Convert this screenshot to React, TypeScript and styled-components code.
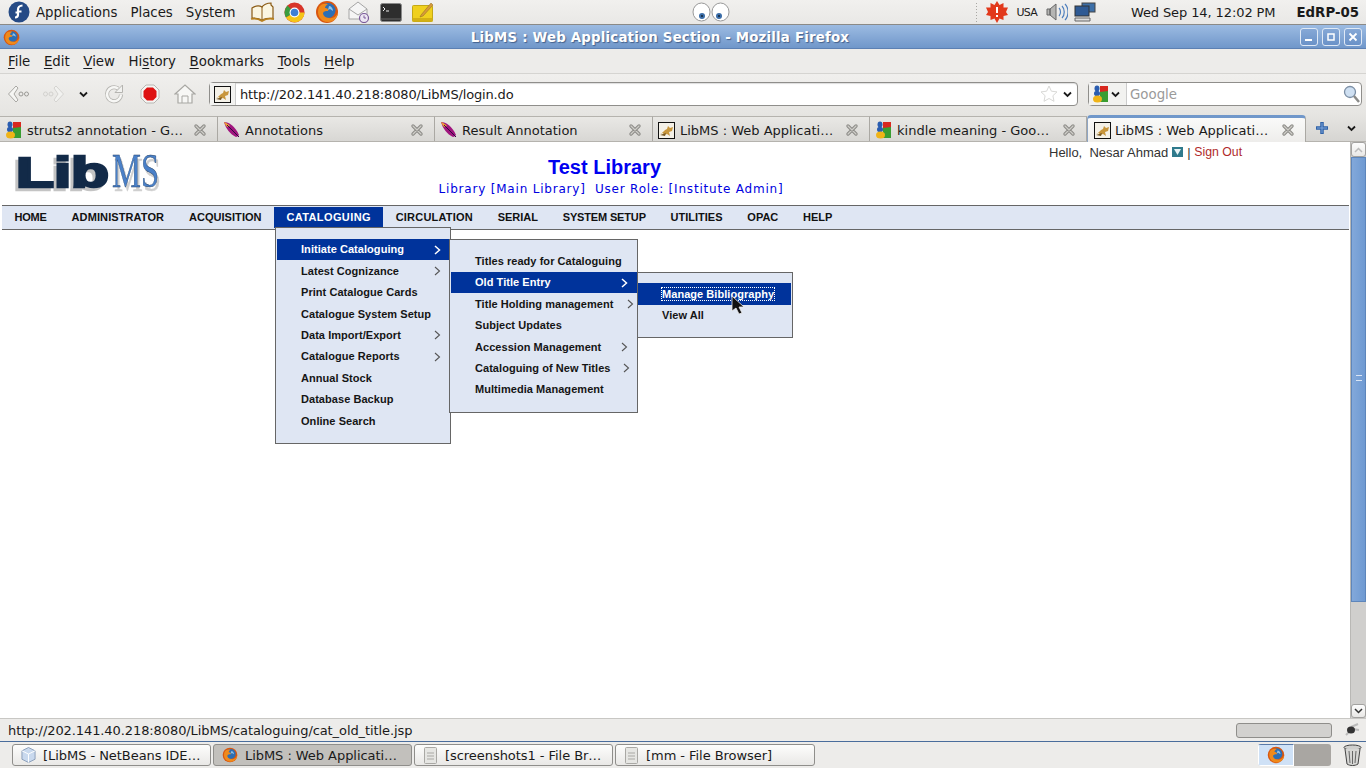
import React from "react";
import styled, { createGlobalStyle } from "styled-components";

const Global = createGlobalStyle`
  html, body { margin: 0; padding: 0; background: #fff; overflow: hidden; }
  * { box-sizing: border-box; }
  svg { flex: none; display: block; }
`;
const Desktop = styled.div`
  width: 1366px; height: 768px; display: flex; flex-direction: column; overflow: hidden;
  font-family: "DejaVu Sans", sans-serif; font-size: 13.33px; color: #1a1a1a; background: #edecea;
`;
const TopPanel = styled.div`
  height: 25px; display: flex; align-items: center; background: linear-gradient(#f1f0ee, #e9e8e6);
  border-bottom: 1px solid #8b8a87; flex: none; padding: 0 7px 0 8px;
`;
const PanelMenu = styled.span`margin-left: ${p => p.$ml}px; white-space: nowrap;`;
const LaunchIcons = styled.div`display: flex; align-items: center; margin-left: 11px;`;
const LaunchCell = styled.div`width: 32px; height: 24px; display: flex; align-items: center; justify-content: center;`;
const EyesWrap = styled.div`margin-left: 253px; display: flex; align-items: center;`;
const Tray = styled.div`margin-left: auto; display: flex; align-items: center;`;
const TrayHandle = styled.div`
  width: 4px; height: 20px; margin-right: 7px;
  background-image: radial-gradient(#a8a7a3 0.7px, transparent 0.9px); background-size: 3px 3px;
`;
const TrayText = styled.span`
  font-size: ${p => p.$size || 13}px; font-weight: ${p => p.$bold ? 700 : 400}; margin-left: ${p => p.$ml}px; white-space: nowrap;
  letter-spacing: ${p => p.$ls || 0}px;
`;
const TitleBar = styled.div`
  height: 24px; flex: none; display: flex; align-items: center; padding: 1px 3px 0 3px;
  background: linear-gradient(#9cbbe2, #7097ca); border-bottom: 1px solid #5c80b3;
`;
const TitleText = styled.div`
  flex: 1; text-align: center; color: #fff; font-weight: 700; font-size: 13.33px; letter-spacing: .2px;
  text-shadow: 1px 1px 1px #44618c;
`;
const WinButtons = styled.div`display: flex; gap: 4px; margin-right: 1px;`;
const WinButton = styled.div`
  width: 18px; height: 18px; border: 1px solid #dfe9f6; border-radius: 3px; background: linear-gradient(#86a8d6, #6a92c8);
  display: flex; align-items: center; justify-content: center;
`;
const MenuBar = styled.div`
  height: 25px; flex: none; display: flex; align-items: center; padding-left: 8px; gap: 13.6px;
  background: #edecea; border-bottom: 1px solid #d5d4d1;
`;
const MenuLabel = styled.span`
  u { text-decoration: underline; text-underline-offset: 2px; text-decoration-thickness: 1px; }
`;
const NavBar = styled.div`
  height: 40px; flex: none; display: flex; align-items: center; padding-left: 7px;
  background: linear-gradient(#f0efed, #e6e5e2);
`;
const NavIcons = styled.div`display: flex; align-items: center; width: 202px;`;
const NavIcon = styled.div`margin-left: ${p => p.$ml || 0}px; display: flex;`;
const UrlBox = styled.div`
  width: 869px; height: 24px; display: flex; align-items: center; background: #fff;
  border: 1px solid #8f8e8b; border-radius: 4px; box-shadow: inset 0 1px 1px #ddd;
`;
const UrlFav = styled.div`
  width: 26px; height: 22px; display: flex; align-items: center; justify-content: center; border-right: 1px solid #ccc; background: #f2f2f0;
`;
const UrlText = styled.span`margin-left: 4px; flex: 1; font-size: 13px; letter-spacing: -.16px;`;
const UrlDrop = styled.span`margin: 0 4px 0 4px; display: flex;`;
const SearchBox = styled.div`
  width: 274px; height: 24px; margin-left: 10px; display: flex; align-items: center; background: #fff;
  border: 1px solid #8f8e8b; border-radius: 4px;
`;
const EnginePick = styled.div`
  width: 38px; height: 22px; display: flex; align-items: center; padding-left: 3px; gap: 1px; border-right: 1px solid #ccc; background: #f2f2f0;
`;
const SearchPlaceholder = styled.span`flex: 1; color: #9a9a9a; margin-left: 3px;`;
const TabStrip = styled.div`
  height: 28px; flex: none; display: flex; align-items: flex-end; background: linear-gradient(#e6e5e2, #d6d5d2);
  border-bottom: 1px solid #b5b3ae; font-size: 13px;
`;
const Tab = styled.div`
  width: ${p => p.$w}px; height: ${p => p.$active ? 27 : 25}px; display: flex; align-items: center; flex: none;
  padding: ${p => p.$active ? 0 : 2}px 0 0 ${p => p.$active ? 6 : 5}px;
  background: ${p => p.$active ? "linear-gradient(#fafaf9, #eeedeb)" : "linear-gradient(#e9e8e5, #d8d7d4)"};
  border-right: 1px solid #aaa8a3; margin-bottom: ${p => p.$active ? -1 : 0}px;
  border-top: ${p => p.$active ? "3px solid #7097ca" : "1px solid #b5b3ae"};
  border-left: ${p => p.$active ? "1px solid #8ea5c4" : "none"};
  border-radius: ${p => p.$active ? "4px 4px 0 0" : "0"};
`;
const TabLabel = styled.span`flex: 1; margin-left: ${p => p.$ml || 5}px; white-space: nowrap;`;
const TabClose = styled.span`width: 14px; height: 14px; margin-right: 10px; display: flex;`;
const TabExtras = styled.div`display: flex; align-items: center; height: 26px; padding-left: 9px; gap: 17px;`;
const Body = styled.div`flex: 1; min-height: 0; display: flex; background: #fff;`;
const Page = styled.div`flex: 1; font-family: "Liberation Sans", Arial, sans-serif; padding-left: 2px;`;
const Header = styled.div`
  height: 63px; display: grid; grid-template-columns: 160px 889px 1fr; margin-left: -2px;
`;
const LogoCell = styled.div`padding: 10px 0 0 12px;`;
const LogoLib = styled.text`
  font-family: "Liberation Sans", sans-serif; font-weight: 700; font-size: 42px; fill: #122a48; stroke: #122a48; stroke-width: 2.5px;
  filter: drop-shadow(-3px 3px 0 #c4c4c4);
`;
const LogoMS = styled.text`
  font-family: "Liberation Serif", serif; font-size: 48px; fill: #4a80c8; stroke: #1c3a60; stroke-width: .4px;
  filter: drop-shadow(2px 4px 0 #cfcfcf);
`;
const HeaderCenter = styled.div`display: flex; flex-direction: column; align-items: center; padding-top: 14px;`;
const LibTitle = styled.div`font-size: 20px; font-weight: 700; color: #0000f0; line-height: 23px;`;
const LibSub = styled.div`
  font-family: "DejaVu Sans", sans-serif; font-size: 12px; color: #0000e0; line-height: 17px; margin-top: 2px; padding-left: 13px; white-space: pre; letter-spacing: .8px;
`;
const Hello = styled.div`font-size: 13px; color: #333; display: flex; align-items: center; white-space: pre; height: 20px;`;
const SignOut = styled.span`color: #b02a2a; font-size: 12.3px;`;
const DownBadge = styled.span`
  display: inline-flex; width: 11px; height: 10px; background: #2f7a8c; margin: 0 4px 0 4px; align-items: center; justify-content: center;
`;
const NavRow = styled.div`
  height: 25px; width: 1347px; display: flex; background: #dfe6f3; border-top: 1px solid #666; border-bottom: 1px solid #666; position: relative;
`;
const NavItem = styled.div`
  height: ${p => p.$active ? 21 : 23}px; margin-top: ${p => p.$active ? 1 : 0}px; padding: 0 12.4px; display: flex; align-items: center;
  font-size: 11px; font-weight: 700; line-height: 21px; letter-spacing: ${p => p.$ls || 0}px;
  color: ${p => p.$active ? "#fff" : "#111"}; background: ${p => p.$active ? "#00339b" : "transparent"};
`;
const Dropdown = styled.div`
  position: absolute; left: ${p => p.$left}px; top: ${p => p.$top}px; width: ${p => p.$w}px; height: ${p => p.$h}px;
  background: #dfe6f3; border: 1px solid #666; padding: ${p => p.$pt}px ${p => p.$pr}px 0 ${p => p.$pleft}px; z-index: ${p => p.$z};
`;
const DropItem = styled.div`
  height: 21.4px; padding-left: ${p => p.$pl}px; display: flex; align-items: center; position: relative;
  font-size: 11px; font-weight: 700; color: ${p => p.$on ? "#fff" : "#151515"}; background: ${p => p.$on ? "#00339b" : "transparent"};
  white-space: nowrap; letter-spacing: .05px;
`;
const Focused = styled.span`outline: 1px dotted #fff; outline-offset: 0;`;
const Chevron = styled.svg`position: absolute; right: ${p => p.$r}px; top: 6px;`;
const Cursor = styled.svg`position: absolute; left: 731px; top: 295px; z-index: 9;`;
const Scrollbar = styled.div`width: 16px; flex: none; display: flex; flex-direction: column; background: #d0cfcd; border-left: 1px solid #b9b8b5;`;
const ScrollBtn = styled.div`
  height: ${p => p.$h}px; flex: none; background: linear-gradient(#fdfdfd, #e9e8e6); border: 1px solid #a3a2a0; border-radius: 3px;
  display: flex; align-items: center; justify-content: center;
`;
const ScrollThumb = styled.div`
  height: 445px; flex: none; padding-bottom: 4px; background: linear-gradient(90deg, #82a8da, #6f9ad2); border: 1px solid #5e86bb; display: flex; align-items: center; justify-content: center;
`;
const ScrollGap = styled.div`flex: 1;`;
const Grip = styled.div`width: 6px; height: 6px; border-top: 1px solid #dbe6f5; border-bottom: 1px solid #dbe6f5; background: linear-gradient(transparent 40%, #dbe6f5 40%, #dbe6f5 60%, transparent 60%);`;
const StatusBar = styled.div`
  height: 24px; flex: none; display: flex; align-items: center; padding-left: 8px; background: #edecea; border-top: 1px solid #c8c7c4; border-bottom: 1px solid #4a6d9c;
`;
const StatusText = styled.span`flex: 1; font-size: 13px; letter-spacing: -.09px;`;
const Progress = styled.div`width: 96px; height: 15px; background: #d2d1cf; border: 1px solid #8f8e8b; border-radius: 3px; margin-right: 12px;`;
const BugWrap = styled.div`width: 22px; display: flex;`;
const TaskBar = styled.div`
  height: 26px; flex: none; display: flex; align-items: center; padding-left: 12px; gap: 2px; background: #edecea; font-size: 13px; letter-spacing: -.05px;
`;
const TaskBtn = styled.div`
  width: ${p => p.$w}px; height: 22px; display: flex; align-items: center; padding-left: 8px; gap: 7px; flex: none; white-space: nowrap;
  border: 1px solid #8f8e8b; border-radius: 3px; background: ${p => p.$on ? "#c2c0bc" : "linear-gradient(#fdfdfc, #e9e8e6)"};
`;
const Switcher = styled.div`
  width: 73px; height: 22px; margin-left: 441px; display: flex; background: #a9a6a2; border-radius: 3px; overflow: hidden; flex: none;
`;
const SwitchActive = styled.div`
  width: 36px; height: 22px; background: #cfe1f6; border: 1px solid #fff; border-top: 1px solid #5a7aa8; display: flex; align-items: center; justify-content: center;
`;
const TrashWrap = styled.div`margin-left: 10px; display: flex;`;

const Firefox = ({ s = 22 }: { s?: number }) => (
  <svg width={s} height={s} viewBox="0 0 24 24">
    <circle cx="12" cy="12" r="11" fill="#d9560f" />
    <circle cx="13" cy="10.5" r="7.5" fill="#2c6fb5" />
    <path d="M4 7c-3 7 1 15 9 15 6 0 10-5 10-10-1 4-5 7-9 6-4 0-6-3-6-5 1-2 3-2 5-2 1-2-1-3-3-3 0-1 1-3 3-4C9 3 6 4 4 7z" fill="#ef8a1c" />
    <path d="M14 6c2 0 4 2 4 5l-3-2-2 1z" fill="#8fc1e8" />
  </svg>
);
const GFav = () => (
  <svg width="17" height="18" viewBox="0 0 17 18">
    <path d="M8 1h8v7H8z" fill="#d8281f" />
    <path d="M8 7l8-1v11H8z" fill="#3a9d32" />
    <ellipse cx="5" cy="3.500" rx="2.500" ry="3" fill="#2a5db0" />
    <ellipse cx="5" cy="8.500" rx="3" ry="2.800" fill="#2a5db0" />
    <ellipse cx="5.500" cy="14" rx="4.500" ry="3.500" fill="#f0b418" />
  </svg>
);
const Feather = () => (
  <svg width="18" height="18" viewBox="0 0 18 18">
    <path d="M1 1c5 0 11 4 15 13-1 1-2 2-3 2C7 13 3 8 1 1z" fill="#a0157e" />
    <path d="M1 1c1 3 3 5 4 5l2-1C5 3 3 1.500 1 1z" fill="#f0a030" />
    <path d="M4 4l12 12" stroke="#300840" strokeWidth="1" />
  </svg>
);
const Tomcat = ({ s = 17 }: { s?: number }) => (
  <svg width={s} height={s} viewBox="0 0 17 17">
    <rect x=".5" y=".5" width="16" height="16" fill="#f4f1e8" stroke="#111" />
    <path d="M2 12c3-1 4-4 7-5l1-3 2 2 3-1-1 4-3 1 1 4-3-2-3 1-1-2z" fill="#c8963c" />
    <path d="M2 13l6-2-1 3z" fill="#7a5a24" />
  </svg>
);
const CloseX = () => (
  <svg width="14" height="14" viewBox="0 0 14 14">
    <path d="M3 3l8 8M11 3l-8 8" stroke="#8d8c88" strokeWidth="3.400" strokeLinecap="round" />
    <path d="M3 3l8 8M11 3l-8 8" stroke="#cfcec9" strokeWidth="1.200" strokeLinecap="round" />
  </svg>
);
const DropV = ({ w = 9 }: { w?: number }) => (
  <svg width={w} height="7" viewBox="0 0 9 7"><path d="M1 1.500l3.500 3.500L8 1.500" fill="none" stroke="#1a1a1a" strokeWidth="1.800" /></svg>
);
const MenuArrow = ({ r, on }: { r: number; on?: boolean }) => (
  <Chevron $r={r} width="7" height="10" viewBox="0 0 7 10">
    <path d="M1 1l4.500 4L1 9" fill="none" stroke={on ? "#fff" : "#555"} strokeWidth={on ? 1.500 : 1.100} />
  </Chevron>
);
const DocIcon = () => (
  <svg width="15" height="17" viewBox="0 0 15 17">
    <rect x="1.500" y=".5" width="12" height="16" rx="1" fill="#e6e6e3" stroke="#a9a8a4" />
    <path d="M4 6h7M4 9h7M4 12h7" stroke="#a9a8a4" />
  </svg>
);

const tabs = [
  { t: "struts2 annotation - G…", i: <GFav />, w: 218, ml: 5 },
  { t: "Annotations", i: <Feather />, w: 217, ml: 4 },
  { t: "Result Annotation", i: <Feather />, w: 218, ml: 4 },
  { t: "LibMS : Web Applicati…", i: <Tomcat />, w: 217, ml: 5 },
  { t: "kindle meaning - Goo…", i: <GFav />, w: 217, ml: 5 },
];
const nav: [string, number][] = [["HOME", -.15], ["ADMINISTRATOR", .1], ["ACQUISITION", .05], ["CATALOGUING", .39], ["CIRCULATION", .2], ["SERIAL", 0], ["SYSTEM SETUP", -.16], ["UTILITIES", 0], ["OPAC", 0], ["HELP", 0]];
const menu1: [string, boolean][] = [["Initiate Cataloguing", true], ["Latest Cognizance", true], ["Print Catalogue Cards", false], ["Catalogue System Setup", false], ["Data Import/Export", true], ["Catalogue Reports", true], ["Annual Stock", false], ["Database Backup", false], ["Online Search", false]];
const menu2: [string, number][] = [["Titles ready for Cataloguing", 0], ["Old Title Entry", 9], ["Title Holding management", 3], ["Subject Updates", 0], ["Accession Management", 9], ["Cataloguing of New Titles", 7], ["Multimedia Management", 0]];

export default function App() {
  return (
    <Desktop>
      <Global />
      <TopPanel>
        <svg width="22" height="22" viewBox="0 0 22 22">
          <circle cx="11" cy="11" r="10.500" fill="#254a85" />
          <path d="M14.500 4.500c-3 0-4.500 2-4.500 4v3H7.500M13.500 10.500H10v3c0 2-1.500 3-3 3" fill="none" stroke="#fff" strokeWidth="2.200" />
        </svg>
        <PanelMenu $ml={6}>Applications</PanelMenu>
        <PanelMenu $ml={13}>Places</PanelMenu>
        <PanelMenu $ml={13}>System</PanelMenu>
        <LaunchIcons>
          <LaunchCell>
            <svg width="25" height="20" viewBox="0 0 25 20"><path d="M2 16V6c3-2 7-3 10-1 1-2 5-4 9-4v2l2 2v11c-4 0-8 0-11 2-3-2-7-2-10-2z" fill="#fbf6e2" stroke="#8a5a14" strokeWidth="1.200" /><path d="M12 5v12" stroke="#8a5a14" /><path d="M1 17c4-1 8 0 11 2 3-2 7-3 12-2" fill="none" stroke="#b8801e" strokeWidth="1.800" /></svg>
          </LaunchCell>
          <LaunchCell>
            <svg width="21" height="21" viewBox="0 0 22 22"><circle cx="11" cy="11" r="10.500" fill="#d8352a" /><path d="M11 11L2 16.200A10.500 10.500 0 0 1 3.600 3.600z" fill="#3a9d3f" /><path d="M11 11l-9 5.200A10.500 10.500 0 0 0 21.500 11z" fill="#f5c518" /><circle cx="11" cy="11" r="5.200" fill="#fff" /><circle cx="11" cy="11" r="4" fill="#3e7fd6" /></svg>
          </LaunchCell>
          <LaunchCell><Firefox s={24} /></LaunchCell>
          <LaunchCell>
            <svg width="22" height="22" viewBox="0 0 22 22"><path d="M1 8l9-7 9 7v10H1z" fill="#f5f5f5" stroke="#a5a5a5" /><path d="M1 8l9 6 9-6" fill="none" stroke="#a5a5a5" /><circle cx="16" cy="17" r="4.500" fill="#ece6f2" stroke="#7a5a9a" strokeWidth="1.200" /><path d="M16 14.500V17h2" stroke="#7a5a9a" fill="none" /></svg>
          </LaunchCell>
          <LaunchCell>
            <svg width="22" height="19" viewBox="0 0 22 19"><rect x=".5" y=".5" width="21" height="18" rx="2" fill="#2e2e2e" stroke="#8a8a8a" /><path d="M3 4l2 2-2 2" stroke="#eee" fill="none" /><path d="M6 8h3" stroke="#eee" /><path d="M1 16h20" stroke="#666" /></svg>
          </LaunchCell>
          <LaunchCell>
            <svg width="22" height="21" viewBox="0 0 22 21"><rect x="0.500" y="3.500" width="20" height="16" rx="1" fill="#f0d01e" stroke="#c4a818" /><path d="M0.500 16h20v3.500H.5z" fill="#d3b014" /><path d="M9 13l10-12 2 2-10 11-3 1z" fill="#d79a3a" stroke="#8a6a20" strokeWidth=".5" /></svg>
          </LaunchCell>
        </LaunchIcons>
        <EyesWrap>
          <svg width="38" height="20" viewBox="0 0 38 20">
            <ellipse cx="9.500" cy="10" rx="8.500" ry="9" fill="#fff" stroke="#999" /><ellipse cx="28.500" cy="10" rx="8.500" ry="9" fill="#fff" stroke="#999" />
            <circle cx="10" cy="14" r="3" fill="#3b6da8" /><circle cx="27" cy="14" r="3" fill="#3b6da8" />
            <circle cx="10" cy="14" r="1" fill="#123" /><circle cx="27" cy="14" r="1" fill="#123" />
          </svg>
        </EyesWrap>
        <Tray>
          <TrayHandle />
          <svg width="22" height="22" viewBox="0 0 22 22"><path d="M11 0l2.500 4 4-2 0 4.500 4.500 0-2 4.500 2 3-4.500 1v4l-4-1.500L11 22l-2.500-4.500-4 1.500v-4L0 14l2-3-2-4.500 4.500 0 0-4.500 4 2z" fill="#e2391c" /><path d="M11 6v6M11 14v2" stroke="#fff" strokeWidth="2" /></svg>
          <TrayText $size={11} $ml={9} $ls={-.8}>USA</TrayText>
          <svg width="22" height="20" viewBox="0 0 22 20" style={{ marginLeft: 9 }}><path d="M1 7h3v6H1zM4 7l6-5v16l-6-5z" fill="#b5b5b3" stroke="#666" /><path d="M13 6c2 2 2 6 0 8M16 4c3 3 3 9 0 12M19 2c4 4 4 12 0 16" fill="none" stroke="#4f7fbd" strokeWidth="1.200" /></svg>
          <svg width="22" height="21" viewBox="0 0 22 21" style={{ marginLeft: 6 }}><rect x="8" y="1" width="13" height="9" fill="#3d6fa8" stroke="#444" /><rect x="1" y="4" width="14" height="10" fill="#2f5a94" stroke="#333" /><path d="M1 16h15v3H1z" fill="#ddd" stroke="#666" /></svg>
          <TrayText $ml={35} $ls={-.1}>Wed Sep 14, 12:02 PM</TrayText>
          <TrayText $ml={21} $bold $size={13.33}>EdRP-05</TrayText>
        </Tray>
      </TopPanel>
      <TitleBar>
        <Firefox s={17} />
        <TitleText>LibMS : Web Application Section - Mozilla Firefox</TitleText>
        <WinButtons>
          <WinButton><svg width="10" height="10" viewBox="0 0 10 10"><path d="M1 8h7" stroke="#fff" strokeWidth="2" /></svg></WinButton>
          <WinButton><svg width="10" height="10" viewBox="0 0 10 10"><rect x="2" y="2" width="6" height="6" fill="none" stroke="#fff" strokeWidth="1.500" /></svg></WinButton>
          <WinButton><svg width="10" height="10" viewBox="0 0 10 10"><path d="M1.500 1.500l7 7M8.500 1.500l-7 7" stroke="#fff" strokeWidth="1.800" /></svg></WinButton>
        </WinButtons>
      </TitleBar>
      <MenuBar>
        <MenuLabel><u>F</u>ile</MenuLabel>
        <MenuLabel><u>E</u>dit</MenuLabel>
        <MenuLabel><u>V</u>iew</MenuLabel>
        <MenuLabel>Hi<u>s</u>tory</MenuLabel>
        <MenuLabel><u>B</u>ookmarks</MenuLabel>
        <MenuLabel><u>T</u>ools</MenuLabel>
        <MenuLabel><u>H</u>elp</MenuLabel>
      </MenuBar>
      <NavBar>
        <NavIcons>
          <NavIcon>
            <svg width="22" height="18" viewBox="0 0 22 18"><path d="M9 1L1.500 9 9 17l2-2-4-6 4-6z" fill="#f6f6f4" stroke="#a8a7a3" strokeLinejoin="round" /><circle cx="14" cy="9" r="2" fill="none" stroke="#9a9995" /><circle cx="19.500" cy="9" r="2" fill="none" stroke="#9a9995" /></svg>
          </NavIcon>
          <NavIcon $ml={14}>
            <svg width="22" height="18" viewBox="0 0 22 18"><path d="M13 1l7.500 8-7.500 8-2-2 4-6-4-6z" fill="#f2f2f0" stroke="#d4d3d0" strokeLinejoin="round" /><circle cx="2.500" cy="9" r="2" fill="none" stroke="#d2d1ce" /><circle cx="8" cy="9" r="2" fill="none" stroke="#d2d1ce" /></svg>
          </NavIcon>
          <NavIcon $ml={13}><DropV w={11} /></NavIcon>
          <NavIcon $ml={15}>
            <svg width="20" height="20" viewBox="0 0 20 20"><path d="M17 10.500a7 7 0 1 1-3-6" fill="none" stroke="#b5b4b0" strokeWidth="4" /><path d="M17 10.500a7 7 0 1 1-3-6" fill="none" stroke="#f7f7f5" strokeWidth="2.400" /><path d="M18.500 1v7.500H11z" fill="#f2f2f0" stroke="#b5b4b0" /></svg>
          </NavIcon>
          <NavIcon $ml={16}>
            <svg width="20" height="20" viewBox="0 0 20 20"><path d="M6 1h8l5 5v8l-5 5H6l-5-5V6z" fill="#f5f5f3" stroke="#b8b7b3" /><path d="M7 3.500h6L16.500 7v6L13 16.500H7L3.500 13V7z" fill="#de1212" /></svg>
          </NavIcon>
          <NavIcon $ml={14}>
            <svg width="22" height="20" viewBox="0 0 22 20"><path d="M1 10L11 1l10 9h-3v9H4v-9z" fill="#f7f7f5" stroke="#a8a7a3" strokeWidth="1.200" /><path d="M8 19v-7h6v7" fill="none" stroke="#a8a7a3" /></svg>
          </NavIcon>
        </NavIcons>
        <UrlBox>
          <UrlFav><Tomcat /></UrlFav>
          <UrlText>http://202.141.40.218:8080/LibMS/login.do</UrlText>
          <svg width="18" height="18" viewBox="0 0 18 18"><path d="M9 1l2.400 5.200 5.600.7-4.100 3.800 1.100 5.600L9 13.500 4 16.300l1.100-5.600L1 6.900l5.600-.7z" fill="#fff" stroke="#d9d9d7" /></svg>
          <UrlDrop><DropV w={11} /></UrlDrop>
        </UrlBox>
        <SearchBox>
          <EnginePick><GFav /><DropV w={11} /></EnginePick>
          <SearchPlaceholder>Google</SearchPlaceholder>
          <svg width="17" height="18" viewBox="0 0 17 18" style={{ marginRight: 1 }}><circle cx="7" cy="7" r="5.500" fill="#cfe0f2" stroke="#7c8fa5" strokeWidth="1.300" /><path d="M11 11l5 6" stroke="#8a8a88" strokeWidth="2.500" /></svg>
        </SearchBox>
      </NavBar>
      <TabStrip>
        {tabs.map(t => (
          <Tab key={t.t} $w={t.w}>{t.i}<TabLabel $ml={t.ml}>{t.t}</TabLabel><TabClose><CloseX /></TabClose></Tab>
        ))}
        <Tab $active $w={219}><Tomcat /><TabLabel $ml={4}>LibMS : Web Applicati…</TabLabel><TabClose><CloseX /></TabClose></Tab>
        <TabExtras>
          <svg width="14" height="14" viewBox="0 0 14 14"><path d="M7 1v12M1 7h12" stroke="#2f62a8" strokeWidth="3.500" /><path d="M7 2v10M2 7h10" stroke="#7ea6dc" strokeWidth="1" /></svg>
          <DropV w={11} />
        </TabExtras>
      </TabStrip>
      <Body>
        <Page>
          <Header>
            <LogoCell>
              <svg width="150" height="46" viewBox="0 0 150 46">
                <LogoLib x="4" y="34.500" textLength="93" lengthAdjust="spacingAndGlyphs">Lib</LogoLib>
                <LogoMS x="100" y="35" textLength="47" lengthAdjust="spacingAndGlyphs">MS</LogoMS>
              </svg>
            </LogoCell>
            <HeaderCenter>
              <LibTitle>Test Library</LibTitle>
              <LibSub>Library [Main Library]  User Role: [Institute Admin]</LibSub>
            </HeaderCenter>
            <Hello>
              Hello,  Nesar Ahmad
              <DownBadge><svg width="7" height="6" viewBox="0 0 7 6"><path d="M0 0h7L3.500 6z" fill="#e8f4f6" /></svg></DownBadge>
              | <SignOut>Sign Out</SignOut>
            </Hello>
          </Header>
          <NavRow>
            {nav.map(([n, ls]) => (
              <NavItem key={n} $ls={ls} $active={n === "CATALOGUING"}>{n}</NavItem>
            ))}
            <Dropdown $left={273} $top={21} $w={176} $h={217} $pt={10.700} $pr={1} $pleft={1} $z={1}>
              {menu1.map(([t, arrow], i) => (
                <DropItem key={t} $pl={24} $on={i === 0}>{t}{arrow && <MenuArrow r={8} on={i === 0} />}</DropItem>
              ))}
            </Dropdown>
            <Dropdown $left={447} $top={33} $w={189} $h={174} $pt={10.300} $pr={0} $pleft={1} $z={2}>
              {menu2.map(([t, r], i) => (
                <DropItem key={t} $pl={24} $on={i === 1}>{t}{r > 0 && <MenuArrow r={r} on={i === 1} />}</DropItem>
              ))}
            </Dropdown>
            <Dropdown $left={635} $top={66} $w={156} $h={66} $pt={10.200} $pr={1} $pleft={0} $z={3}>
              <DropItem $pl={24} $on><Focused>Manage Bibliography</Focused></DropItem>
              <DropItem $pl={24}>View All</DropItem>
            </Dropdown>
          </NavRow>
        </Page>
        <Scrollbar>
          <ScrollBtn $h={15}><svg width="9" height="6" viewBox="0 0 9 6"><path d="M1 5l3.500-3.500L8 5" fill="none" stroke="#bbb" strokeWidth="1.500" /></svg></ScrollBtn>
          <ScrollThumb><Grip /></ScrollThumb>
          <ScrollGap />
          <ScrollBtn $h={14}><svg width="9" height="6" viewBox="0 0 9 6"><path d="M1 1l3.500 3.500L8 1" fill="none" stroke="#333" strokeWidth="1.500" /></svg></ScrollBtn>
        </Scrollbar>
      </Body>
      <Cursor width="14" height="20" viewBox="0 0 14 20"><path d="M1 1v15l4-3 3 6 3-1-3-6h5z" fill="#111" stroke="#eee" strokeWidth=".8" /></Cursor>
      <StatusBar>
        <StatusText>http://202.141.40.218:8080/LibMS/cataloguing/cat_old_title.jsp</StatusText>
        <Progress />
        <BugWrap>
          <svg width="16" height="14" viewBox="0 0 16 14"><path d="M2 12l5-5M7 4l7-3M8 6l7 1" stroke="#bbb" strokeWidth="2" /><ellipse cx="7" cy="7" rx="4" ry="3.500" fill="#333" /></svg>
        </BugWrap>
      </StatusBar>
      <TaskBar>
        <TaskBtn $w={199}>
          <svg width="15" height="18" viewBox="0 0 16 18"><path d="M8 1l7 3.500v9L8 17l-7-3.500v-9z" fill="#c9d9ee" stroke="#8a9db8" /><path d="M1 4.500L8 8l7-3.500M8 8v9" fill="none" stroke="#fff" /></svg>
          [LibMS - NetBeans IDE…
        </TaskBtn>
        <TaskBtn $w={199} $on><Firefox s={16} />LibMS : Web Applicati…</TaskBtn>
        <TaskBtn $w={199}><DocIcon />[screenshots1 - File Br…</TaskBtn>
        <TaskBtn $w={200}><DocIcon />[mm - File Browser]</TaskBtn>
        <Switcher>
          <SwitchActive><Firefox s={18} /></SwitchActive>
        </Switcher>
        <TrashWrap>
          <svg width="19" height="22" viewBox="0 0 19 22"><ellipse cx="9.500" cy="3.500" rx="8.500" ry="2.500" fill="#cfcfcd" stroke="#444" /><path d="M2 5l2 15c3 2 8 2 11 0l2-15" fill="#d6d6d4" stroke="#444" /><path d="M6 7l1 12M9.500 7v13M13 7l-1 12" stroke="#666" /></svg>
        </TrashWrap>
      </TaskBar>
    </Desktop>
  );
}
